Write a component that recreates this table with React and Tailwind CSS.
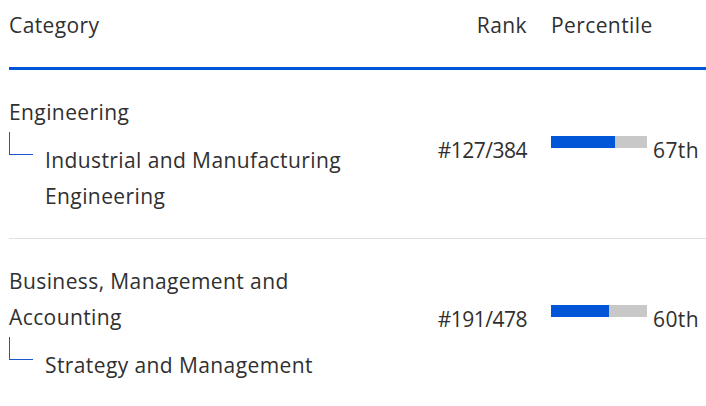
import React from "react";

const rows = [
  {
    main: ["Engineering"],
    sub: ["Industrial and Manufacturing", "Engineering"],
    rank: "#127/384",
    pct: 67,
  },
  {
    main: ["Business, Management and", "Accounting"],
    sub: ["Strategy and Management"],
    rank: "#191/478",
    pct: 60,
  },
];

export default function App() {
  return (
    <div
      className="w-[706px] h-[406px] bg-white overflow-hidden text-[#303030] text-[21px] tracking-[0.4px] leading-[36px]"
      style={{ fontFamily: '"Open Sans", "Noto Sans", sans-serif' }}
    >
      <div className="ml-[9px] w-[697px]">
        <div className="flex pt-[7px] pb-[24px] border-b-[3px] border-[#0056d6]">
          <div className="flex-1">Category</div>
          <div className="w-[120px] text-right pr-6">Rank</div>
          <div className="w-[155px]">Percentile</div>
        </div>
        {rows.map((r, i) => (
          <div
            key={i}
            className={`flex items-center py-6 ${i === 0 ? "border-b border-[#e0e0e0]" : ""}`}
          >
            <div className="flex-1">
              {r.main.map((t, j) => (
                <div key={j}>{t}</div>
              ))}
              <div className="relative mt-3 pl-9">
                <div className="absolute left-0 top-[-10px] w-6 h-[23px] border-l border-b border-[#1a56cc]" />
                {r.sub.map((t, j) => (
                  <div key={j}>{t}</div>
                ))}
              </div>
            </div>
            <div className="w-[120px] text-right pr-6 mb-2 tracking-[-0.5px]">{r.rank}</div>
            <div className="w-[155px] flex items-start mb-2">
              <div className="mt-1 w-24 h-3 bg-[#c8c8c8] shrink-0">
                <div className="h-full bg-[#0056d6]" style={{ width: `${r.pct}%` }} />
              </div>
              <div className="ml-[6px]">{r.pct}th</div>
            </div>
          </div>
        ))}
      </div>
    </div>
  );
}
